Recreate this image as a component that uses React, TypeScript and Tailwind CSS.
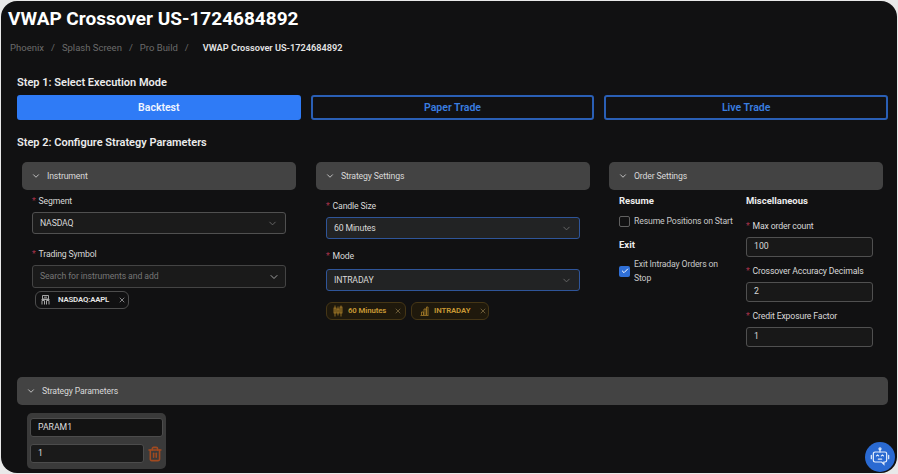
import { ChevronDown, X, Check, Trash2 } from "lucide-react";

const Label = ({ text }: { text: string }) => (
  <div className="flex items-center gap-[3px] text-[8.7px] leading-[14px] tracking-[-0.15px] text-[#d8d8d8]">
    <span className="text-[#a8324a]">*</span>
    {text}
  </div>
);

const SelectBox = ({ value, focused }: { value: string; focused?: boolean }) => (
  <div
    className={`flex h-[22px] items-center justify-between rounded-[3px] border px-[7px] text-[8.7px] tracking-[-0.15px] text-[#d8d8d8] ${
      focused ? "border-[#2f5599] bg-[#222324]" : "border-[#505050] bg-[#1b1b1b]"
    }`}
  >
    <span className="pt-[1px]">{value}</span>
    <ChevronDown size={11} className="text-[#6a6a6a]" />
  </div>
);

const PanelHeader = ({ title }: { title: string }) => (
  <div className="flex h-[28px] items-center gap-[6px] rounded-[5px] bg-[#434343] pl-[9px] text-[8.7px] tracking-[-0.15px] text-[#d8d8d8]">
    <ChevronDown size={10} />
    <span className="pt-[1px]">{title}</span>
  </div>
);

const NumberField = ({ label, value }: { label: string; value: string }) => (
  <div className="flex flex-col gap-[4px]">
    <Label text={label} />
    <div className="flex h-[20px] w-[127px] items-center rounded-[3px] border border-[#505050] bg-[#181818] px-[7px] text-[8.7px] text-[#d8d8d8]">
      {value}
    </div>
  </div>
);

const CandleIcon = () => (
  <svg width="10" height="12" viewBox="0 0 10 12" fill="none" stroke="#a87d2a" strokeWidth="0.8" className="shrink-0">
    <path d="M2 0.5v11M5 1.5v9M8 0.5v11" />
    <rect x="1" y="3" width="2" height="5" />
    <rect x="4" y="4" width="2" height="4" />
    <rect x="7" y="2" width="2" height="6" />
  </svg>
);

const BarsIcon = () => (
  <svg width="9" height="10" viewBox="0 0 9 10" fill="none" stroke="#a87d2a" strokeWidth="0.8" className="shrink-0">
    <path d="M0.5 9.5h8M1.5 9V6h2v3M4 9V3h2v6M6.5 9V1h1.5v8" />
  </svg>
);

const BuildingIcon = () => (
  <svg width="9" height="10" viewBox="0 0 9 10" fill="none" stroke="#b5b5b5" strokeWidth="0.9" className="shrink-0">
    <path d="M1.5 0.5h6v3.5h-6zM0.5 4.5h8M1 9.5v-4h2.5v4M5.5 9.5v-4H8v4M3 2.2h3" />
  </svg>
);

const BotIcon = () => (
  <svg width="20" height="20" viewBox="0 0 18 18" fill="none" stroke="#e4edfb" strokeWidth="1.1" strokeLinecap="round">
    <circle cx="9" cy="1.6" r="0.9" />
    <path d="M9 2.5v2" />
    <path d="M4.5 4.5h9a1.5 1.5 0 0 1 1.5 1.5v6a1.5 1.5 0 0 1-1.5 1.5h-1v2l-2-2h-6A1.5 1.5 0 0 1 3 12V6a1.5 1.5 0 0 1 1.5-1.5z" />
    <path d="M1.2 7.5v3M16.8 7.5v3" />
    <path d="M5.8 8l1 -0.8l1 0.8M10.2 8l1 -0.8l1 0.8M7.5 11h3" />
  </svg>
);

const ModeButton = ({ label, active }: { label: string; active?: boolean }) => (
  <div
    className={`flex h-[25px] flex-1 items-center justify-center rounded-[3px] border-2 text-[10.5px] font-semibold ${
      active ? "border-[#2f7bf6] bg-[#2f7bf6] text-[#f0f5ff]" : "border-[#2a5fb5] text-[#3a7ee0]"
    }`}
  >
    {label}
  </div>
);

export default function App() {
  return (
    <div className="h-[474px] w-[898px] overflow-hidden bg-[#e9e9e9] p-[1px] font-['Roboto',sans-serif]">
      <div className="relative h-full w-full overflow-hidden rounded-[16px] bg-[#111112]">
        <h1 className="pl-[7px] pt-[5px] text-[19px] font-bold leading-[25px] text-white">VWAP Crossover US-1724684892</h1>

        <div className="flex items-center pl-[9px] pt-[10px] text-[9.5px] leading-[14px] text-[#6b6b6b]">
          <span>Phoenix</span>
          <span className="px-[7px]">/</span>
          <span>Splash Screen</span>
          <span className="px-[7px]">/</span>
          <span>Pro Build</span>
          <span className="pl-[7px] pr-[14px]">/</span>
          <span className="text-[9.2px] font-semibold text-[#e4e4e4]">VWAP Crossover US-1724684892</span>
        </div>

        <div className="pl-[16px] pr-[9px] pt-[20px]">
          <div className="text-[11px] font-semibold leading-[15px] text-[#ececec]">Step 1: Select Execution Mode</div>
          <div className="mt-[5px] flex gap-[10px]">
            <ModeButton label="Backtest" active />
            <ModeButton label="Paper Trade" />
            <ModeButton label="Live Trade" />
          </div>
          <div className="mt-[15px] text-[11px] font-semibold leading-[15px] text-[#ececec]">Step 2: Configure Strategy Parameters</div>
        </div>

        <div className="mt-[12px] flex pl-[21px]">
          <div className="w-[274px]">
            <PanelHeader title="Instrument" />
            <div className="px-[10px] pt-[4px]">
              <Label text="Segment" />
              <div className="mt-[4px]">
                <SelectBox value="NASDAQ" />
              </div>
              <div className="mt-[13px]">
                <Label text="Trading Symbol" />
              </div>
              <div className="mt-[4px]">
                <div className="flex h-[23px] items-center justify-between rounded-[3px] border border-[#444] bg-[#1a1a1a] pl-[7px] pr-[5px] text-[8.7px] tracking-[-0.1px] text-[#767676]">
                  <span className="pt-[1px]">Search for instruments and add</span>
                  <ChevronDown size={12} className="text-[#a0a0a0]" />
                </div>
              </div>
              <div className="ml-[3px] mt-[3px] flex h-[18px] w-[94px] items-center rounded-[6px] border border-[#4d4d4d] pl-[5px] text-[7.8px] font-semibold tracking-[-0.15px] whitespace-nowrap text-[#e6e6e6]">
                <BuildingIcon />
                <span className="ml-[8px]">NASDAQ:AAPL</span>
                <X size={8} className="ml-[9px] shrink-0 text-[#bdbdbd]" />
              </div>
            </div>
          </div>

          <div className="ml-[20px] w-[274px]">
            <PanelHeader title="Strategy Settings" />
            <div className="px-[10px] pt-[9px]">
              <Label text="Candle Size" />
              <div className="mt-[4px]">
                <SelectBox value="60 Minutes" focused />
              </div>
              <div className="mt-[10px]">
                <Label text="Mode" />
              </div>
              <div className="mt-[6px]">
                <SelectBox value="INTRADAY" focused />
              </div>
              <div className="mt-[11px] flex gap-[5px] text-[7.8px] font-semibold tracking-[-0.1px] whitespace-nowrap text-[#c99a35]">
                <div className="flex h-[18px] w-[80px] items-center rounded-[6px] border border-[#453616] bg-[#1f190c] pl-[6px]">
                  <CandleIcon />
                  <span className="ml-[5px]">60 Minutes</span>
                  <X size={8} className="ml-[8px] shrink-0 text-[#8f7a4d]" />
                </div>
                <div className="flex h-[18px] w-[78px] items-center rounded-[6px] border border-[#453616] bg-[#1f190c] pl-[8px]">
                  <BarsIcon />
                  <span className="ml-[5px]">INTRADAY</span>
                  <X size={8} className="ml-[9px] shrink-0 text-[#8f7a4d]" />
                </div>
              </div>
            </div>
          </div>

          <div className="ml-[19px] w-[274px]">
            <PanelHeader title="Order Settings" />
            <div className="flex pl-[10px] pt-[4px]">
              <div className="w-[127px]">
                <div className="text-[9.5px] font-bold leading-[14px] text-[#ececec]">Resume</div>
                <div className="mt-[7px] flex items-center gap-[4px] text-[8.7px] tracking-[-0.15px] text-[#c8c8c8]">
                  <span className="h-[11px] w-[11px] rounded-[2px] border border-[#606060]" />
                  <span className="whitespace-nowrap">Resume Positions on Start</span>
                </div>
                <div className="mt-[10px] text-[9.5px] font-bold leading-[14px] text-[#ececec]">Exit</div>
                <div className="mt-[5px] flex items-center gap-[4px] text-[8.7px] leading-[14px] tracking-[-0.15px] text-[#c8c8c8]">
                  <span className="flex h-[11px] w-[11px] shrink-0 items-center justify-center rounded-[2px] bg-[#2f6fd6]">
                    <Check size={8} strokeWidth={3} className="text-white" />
                  </span>
                  <span>
                    Exit Intraday Orders on
                    <br />
                    Stop
                  </span>
                </div>
              </div>
              <div className="flex flex-col">
                <div className="text-[9.5px] font-bold leading-[14px] text-[#ececec]">Miscellaneous</div>
                <div className="mt-[11px] flex flex-col gap-[7px]">
                  <NumberField label="Max order count" value="100" />
                  <NumberField label="Crossover Accuracy Decimals" value="2" />
                  <NumberField label="Credit Exposure Factor" value="1" />
                </div>
              </div>
            </div>
          </div>
        </div>

        <div className="absolute bottom-[68px] left-[16px] right-[9px]">
          <PanelHeader title="Strategy Parameters" />
        </div>

        <div className="absolute bottom-[4px] left-[26px] flex h-[56px] w-[139px] flex-col gap-[7px] rounded-[5px] bg-[#3a3a3a] px-[3px] pt-[5px]">
          <div className="flex h-[19px] items-center rounded-[3px] border border-[#4c4c4c] bg-[#131313] px-[7px] pt-[1px] text-[8.7px] text-[#dedede]">PARAM1</div>
          <div className="flex items-center gap-[3px]">
            <div className="flex h-[19px] w-[115px] items-center rounded-[3px] border border-[#4c4c4c] bg-[#1a1a1a] px-[7px] pt-[1px] text-[8.7px] text-[#dedede]">1</div>
            <Trash2 size={16} strokeWidth={2.4} className="text-[#a04a20]" />
          </div>
        </div>

        <div className="absolute bottom-[1px] right-[2px] flex h-[30px] w-[30px] items-center justify-center rounded-full bg-[#2a6ad2]">
          <BotIcon />
        </div>
      </div>
    </div>
  );
}
